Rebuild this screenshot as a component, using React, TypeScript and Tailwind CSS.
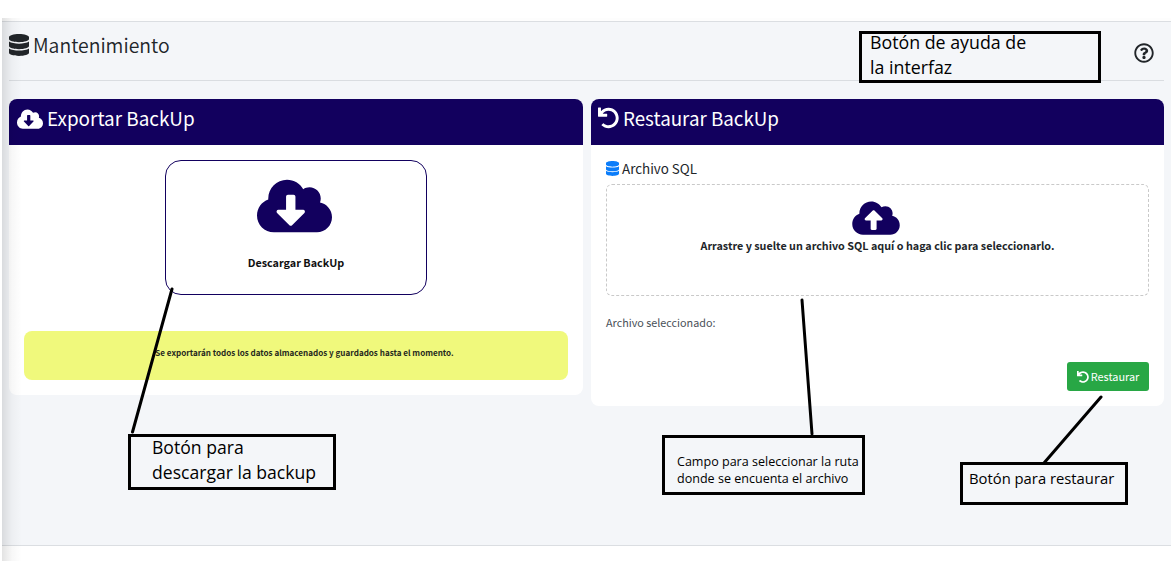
import React from "react";
import {
  FaDatabase,
  FaCloudDownloadAlt,
  FaCloudUploadAlt,
  FaUndo,
  FaRegQuestionCircle,
} from "react-icons/fa";

function Note({ className, children }: { className: string; children: React.ReactNode }) {
  return (
    <div className={`absolute border-[3px] border-black font-['Open_Sans',sans-serif] whitespace-nowrap text-black ${className}`}>
      {children}
    </div>
  );
}

function ExportCard() {
  return (
    <section className="flex h-[296px] w-[574px] flex-col overflow-hidden rounded-lg bg-white">
      <header className="flex h-[46px] items-start gap-1 bg-[#12005e] pt-[6px] pl-2 text-white">
        <FaCloudDownloadAlt className="mt-[3px] h-[22px] w-[26px]" preserveAspectRatio="none" />
        <h2 className="text-[18.9px] leading-[26px]">Exportar BackUp</h2>
      </header>
      <div className="flex flex-col px-[15px] pt-[15px]">
        <button className="ml-[141px] flex h-[135px] w-[262px] flex-col items-center rounded-2xl border border-[#12005e] text-[#12005e]">
          <FaCloudDownloadAlt className="mt-[15px] mr-[4px] h-[60px] w-[75px]" />
          <span className="mt-[17px] text-[10.8px] leading-[18px] font-bold text-[#101010]">Descargar BackUp</span>
        </button>
        <div className="mt-9 flex h-[49px] justify-center rounded-lg bg-[#f0f97c] pt-[14px] pl-[17px] text-[8.08px] leading-4 font-bold text-[#26291c]">
          Se exportarán todos los datos almacenados y guardados hasta el momento.
        </div>
      </div>
    </section>
  );
}

function RestoreCard() {
  return (
    <section className="flex h-[307px] w-[573px] flex-col overflow-hidden rounded-lg bg-white">
      <header className="flex h-[46px] items-start gap-1 bg-[#12005e] pt-[6px] pl-[7px] text-white">
        <FaUndo className="mt-[2px] h-[22px] w-[21px]" />
        <h2 className="text-[18.8px] leading-[26px]">Restaurar BackUp</h2>
      </header>
      <div className="flex flex-col px-[15px] pt-[15px]">
        <div className="flex h-6 items-start gap-[3px] text-[#212529]">
          <FaDatabase className="mt-px h-[15px] w-[13px] text-[#0b7dfa]" preserveAspectRatio="none" />
          <span className="-mt-[4px] text-[13.4px] leading-6">Archivo SQL</span>
        </div>
        <div className="flex h-[112px] flex-col items-center rounded-md border border-dashed border-[#c9c9c9]">
          <FaCloudUploadAlt className="mt-[14px] mr-[3px] h-[38px] w-[48px] text-[#12005e]" />
          <span className="text-[10.75px] leading-[18px] font-bold text-[#212529]">
            Arrastre y suelte un archivo SQL aquí o haga clic para seleccionarlo.
          </span>
        </div>
        <p className="mt-[17px] text-[10.8px] leading-[18px] text-[#495057]">Archivo seleccionado:</p>
        <button className="mt-[31px] flex h-[29px] w-[82px] items-center justify-center gap-[2px] self-end rounded-[3px] bg-[#28a745] text-white">
          <FaUndo className="h-[12px] w-[12px]" />
          <span className="-mt-[2px] text-[10.9px] leading-[18px]">Restaurar</span>
        </button>
      </div>
    </section>
  );
}

export default function App() {
  return (
    <div className="relative h-[578px] w-[1173px] overflow-hidden bg-white px-[2px] pt-[18px] font-['Noto_Sans_CJK_SC',sans-serif]">
      <div className="relative h-[543px] w-[1169px]">
        <div className="h-[3px] bg-[#fdfdfd]" />
        <main className="flex h-[525px] flex-col border-y border-[#dbdee2] bg-[#f4f6f9] px-[7px]">
          <div className="flex h-[59px] items-start border-b border-[#dadde1] text-[#212529]">
            <FaDatabase className="mt-[12px] h-[22px] w-[20px]" preserveAspectRatio="none" />
            <h1 className="mt-[8px] ml-1 text-[19.4px] leading-[30px] font-[350]">Mantenimiento</h1>
            <FaRegQuestionCircle className="mt-[21px] mr-[10px] ml-auto h-5 w-5" />
          </div>
          <div className="mt-[18px] flex items-start gap-2">
            <ExportCard />
            <RestoreCard />
          </div>
        </main>
        <div className="absolute top-0 left-0 h-full w-5 bg-linear-to-r from-black/11 via-black/3 to-transparent" />
      </div>

      <svg className="pointer-events-none absolute inset-0" width="1173" height="578" stroke="black" strokeWidth="3" strokeLinecap="round">
        <path d="M172 289 132.500 432M802 300 812 434M1101 397 1044 463" fill="none" />
      </svg>
      <Note className="top-[31px] left-[859px] h-[52px] w-[242px] pl-[8px] text-[17.8px] leading-[25px]">
        <div className="-mt-[4px]">Botón de ayuda de</div>
        <div>la interfaz</div>
      </Note>
      <Note className="top-[434px] left-[128px] h-[56px] w-[208px] pl-[21px] text-[17.6px] leading-[25px]">
        <div className="-mt-[2px]">Botón para</div>
        <div>descargar la backup</div>
      </Note>
      <Note className="top-[435px] left-[662px] h-[60px] w-[203px] pt-[15px] pl-[12px] text-[12.55px] leading-[17px]">
        <div>Campo para seleccionar la ruta</div>
        <div>donde se encuenta el archivo</div>
      </Note>
      <Note className="top-[462px] left-[960px] h-[43px] w-[168px] pt-[3px] pl-[6px] text-[14.8px] leading-5">
        Botón para restaurar
      </Note>
    </div>
  );
}
